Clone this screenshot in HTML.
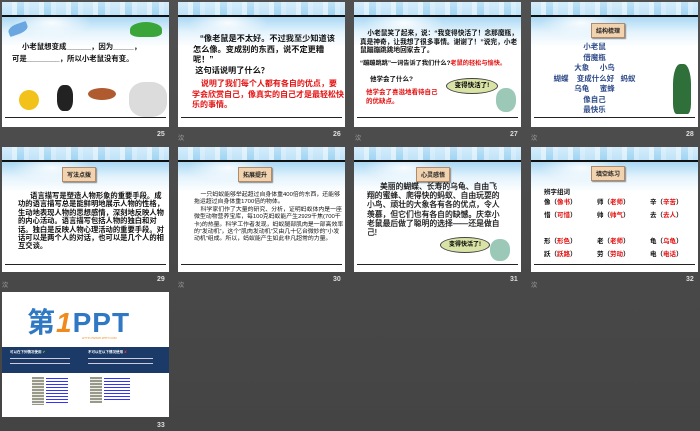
<!DOCTYPE html>
<html><head><meta charset="utf-8"><style>
*{margin:0;padding:0;box-sizing:border-box}
body{width:700px;height:431px;background:linear-gradient(#505050,#444);position:relative;overflow:hidden;font-family:"Liberation Sans","Noto Sans CJK SC",sans-serif}
.s{position:absolute;width:167px;height:125px;background:#fff;overflow:hidden}
.hd{position:absolute;left:0;top:0;width:167px;height:13px;background:linear-gradient(rgba(255,255,255,.35),rgba(255,255,255,0)),repeating-linear-gradient(90deg,#bfe3f8 0 10px,#d9effb 10px 15px,#9fd4f3 15px 22px,#cde9fa 22px 27px);}
.ln{position:absolute;left:0;top:13px;width:167px;height:2px;background:#111}
.fd{position:absolute;left:0;top:15px;width:167px;height:30px;background:radial-gradient(ellipse 40px 14px at 30% 20%,rgba(255,255,255,.9),rgba(255,255,255,0)),linear-gradient(#a9d8f4,rgba(210,235,250,.6) 50%,rgba(255,255,255,0));}
.bl{position:absolute;left:3px;top:115px;width:161px;height:1px;background:#222}
.n{position:absolute;color:#ddd;font-size:7px;font-weight:bold}
.ic{position:absolute;color:#aaa;font-size:6px}
.t{position:absolute;font-weight:bold;color:#111}
.r{color:#e41010}
.tag{position:absolute;background:#f2d3b0;border:1px solid #b08a6a;font-size:6px;font-weight:bold;padding:2px 4px;color:#222;box-shadow:1px 1px 1px #888}
.bub{position:absolute;background:#d9e3a6;border:1px solid #444;border-radius:50%;font-size:6.5px;font-weight:bold;text-align:center}
</style></head><body>

<!-- 25 -->
<div class="s" style="left:2px;top:2px">
<div class="fd"></div><div class="hd"></div><div class="ln"></div>
<div style="position:absolute;left:6px;top:22px;width:20px;height:10px;background:#6aa6e0;border-radius:50% 10% 50% 10%;transform:rotate(-20deg)"></div>
<div style="position:absolute;left:128px;top:20px;width:32px;height:15px;background:#3aa63a;border-radius:50% 50% 30% 30%"></div>
<div class="t" style="left:20px;top:40px;width:148px;font-size:7.4px;line-height:10px">小老鼠想变成______，因为_____，</div>
<div class="t" style="left:10px;top:52px;width:155px;font-size:7.4px;line-height:10px">可是________，所以小老鼠没有变。</div>
<div style="position:absolute;left:17px;top:88px;width:20px;height:20px;background:#f2c21a;border-radius:50%"></div>
<div style="position:absolute;left:55px;top:83px;width:16px;height:26px;background:#222;border-radius:40%"></div>
<div style="position:absolute;left:86px;top:86px;width:28px;height:12px;background:#b05a30;border-radius:50%"></div>
<div style="position:absolute;left:127px;top:80px;width:38px;height:35px;background:#dcdcdc;border-radius:40%"></div>
<div class="bl"></div></div>
<div class="n" style="left:157px;top:131px">25</div>

<!-- 26 -->
<div class="s" style="left:178px;top:2px">
<div class="fd"></div><div class="hd"></div><div class="ln"></div>
<div class="t" style="left:15px;top:32px;width:150px;font-size:8.2px;line-height:10.5px">&nbsp;&nbsp;&nbsp;“像老鼠是不太好。不过我至少知道该怎么像。变成别的东西，说不定更糟呢！”<br>&nbsp;这句话说明了什么？</div>
<div class="t r" style="left:14px;top:77px;width:152px;font-size:8px;line-height:10.5px">&nbsp;&nbsp;&nbsp;&nbsp;说明了我们每个人都有各自的优点，要学会欣赏自己，像真实的自己才是最轻松快乐的事情。</div>
<div class="bl"></div></div>
<div class="ic" style="left:178px;top:133px">㳄</div>
<div class="n" style="left:333px;top:131px">26</div>

<!-- 27 -->
<div class="s" style="left:354px;top:2px">
<div class="fd"></div><div class="hd"></div><div class="ln"></div>
<div class="t" style="left:6px;top:28px;width:158px;font-size:6.7px;line-height:8.5px">&nbsp;&nbsp;&nbsp;&nbsp;小老鼠笑了起来，说：“我变得快活了！念那魔瓶，真是神奇，让我想了很多事情。谢谢了！”说完，小老鼠蹦蹦跳跳地回家去了。</div>
<div class="t" style="left:6px;top:56px;width:165px;font-size:6.2px;white-space:nowrap">“蹦蹦跳跳”一词告诉了我们什么?<span class="r">老鼠的轻松与愉快。</span></div>
<div class="t" style="left:16px;top:71px;font-size:6.5px">他学会了什么?</div>
<div class="t r" style="left:12px;top:86px;width:72px;font-size:6.5px;line-height:9px">他学会了喜滋地看待自己的优缺点。</div>
<div class="bub" style="left:92px;top:76px;width:52px;height:16px;line-height:14px">变得快活了!</div>
<div style="position:absolute;left:142px;top:86px;width:20px;height:24px;background:#9cc8b8;border-radius:45%"></div>
<div class="bl"></div></div>
<div class="ic" style="left:355px;top:133px">㳄</div>
<div class="n" style="left:510px;top:131px">27</div>

<!-- 28 -->
<div class="s" style="left:531px;top:2px">
<div class="fd"></div><div class="hd"></div><div class="ln"></div>
<div class="tag" style="left:60px;top:21px">结构梳理</div>
<div class="t" style="left:-20px;top:40px;width:167px;color:#2f4c8a;font-size:7.5px;line-height:10.5px;text-align:center">小老鼠<br>借魔瓶<br>大象&nbsp;&nbsp;&nbsp;&nbsp;&nbsp;小鸟<br>蝴蝶&nbsp;&nbsp;&nbsp;&nbsp;变成什么好&nbsp;&nbsp;&nbsp;蚂蚁<br>乌龟&nbsp;&nbsp;&nbsp;&nbsp;&nbsp;蜜蜂<br>像自己<br>最快乐</div>
<div style="position:absolute;left:142px;top:62px;width:18px;height:50px;background:#2f6f3a;border-radius:40% 40% 20% 20%"></div>
<div class="bl"></div></div>
<div class="ic" style="left:531px;top:133px">㳄</div>
<div class="n" style="left:686px;top:131px">28</div>

<!-- 29 -->
<div class="s" style="left:2px;top:147px">
<div class="fd"></div><div class="hd"></div><div class="ln"></div>
<div class="tag" style="left:60px;top:20px">写法点拨</div>
<div class="t" style="left:16px;top:45px;width:150px;font-size:7.3px;line-height:8.4px">&nbsp;&nbsp;&nbsp;&nbsp;&nbsp;&nbsp;语言描写是塑造人物形象的重要手段。成功的语言描写总是能鲜明地展示人物的性格，生动地表现人物的思想感情，深刻地反映人物的内心活动。语言描写包括人物的独白和对话。独白是反映人物心理活动的重要手段。对话可以是两个人的对话，也可以是几个人的相互交谈。</div>
<div class="bl" style="top:117px"></div></div>
<div class="ic" style="left:2px;top:280px">㳄</div>
<div class="n" style="left:157px;top:276px">29</div>

<!-- 30 -->
<div class="s" style="left:178px;top:147px">
<div class="fd"></div><div class="hd"></div><div class="ln"></div>
<div class="tag" style="left:60px;top:20px">拓展提升</div>
<div class="t" style="left:16px;top:45px;width:150px;font-size:5.9px;line-height:7.4px;font-weight:normal">&nbsp;&nbsp;&nbsp;&nbsp;一只蚂蚁能够举起超过自身体重400倍的东西，还能够拖运超过自身体重1700倍的物体。<br>&nbsp;&nbsp;&nbsp;&nbsp;科学家们作了大量的研究、分析，证明蚂蚁体内是一座微型动物营养宝库，每100克蚂蚁能产生2929千焦(700千卡)的热量。科学工作者发现，蚂蚁腿部肌肉是一部高效率的“发动机”，这个“肌肉发动机”又由几十亿台微妙的“小发动机”组成。所以，蚂蚁能产生如此非凡超常的力量。</div>
<div class="bl" style="top:117px"></div></div>
<div class="ic" style="left:178px;top:280px">㳄</div>
<div class="n" style="left:333px;top:276px">30</div>

<!-- 31 -->
<div class="s" style="left:354px;top:147px">
<div class="fd"></div><div class="hd"></div><div class="ln"></div>
<div class="tag" style="left:62px;top:20px">心灵感悟</div>
<div class="t" style="left:13px;top:35px;width:133px;font-size:7.8px;line-height:9.2px;font-weight:normal;-webkit-text-stroke:0.2px #111">&nbsp;&nbsp;&nbsp;&nbsp;&nbsp;&nbsp;美丽的蝴蝶、长寿的乌龟、自由飞翔的蜜蜂、爬得快的蚂蚁、自由玩耍的小鸟、顽壮的大象各有各的优点，令人羡慕，但它们也有各自的缺憾。庆幸小老鼠最后做了聪明的选择——还是做自己!</div>
<div class="bub" style="left:86px;top:90px;width:50px;height:16px;line-height:14px;font-size:6px">变得快活了!</div>
<div style="position:absolute;left:136px;top:92px;width:20px;height:22px;background:#9cc8b8;border-radius:45%"></div>
<div class="bl" style="top:117px"></div></div>
<div class="n" style="left:510px;top:276px">31</div>

<!-- 32 -->
<div class="s" style="left:531px;top:147px">
<div class="fd"></div><div class="hd"></div><div class="ln"></div>
<div class="tag" style="left:60px;top:19px">填空练习</div>
<div class="t" style="left:13px;top:39px;font-size:6.5px">辨字组词</div>
<div class="t" style="left:13px;top:49px;width:155px;font-size:6.5px;line-height:13px;white-space:nowrap">
<span style="display:inline-block;width:53px">像（<span class="r">像书</span>）</span><span style="display:inline-block;width:53px">师（<span class="r">老师</span>）</span>辛（<span class="r">辛苦</span>）<br>
<span style="display:inline-block;width:53px">惜（<span class="r">可惜</span>）</span><span style="display:inline-block;width:53px">帅（<span class="r">帅气</span>）</span>去（<span class="r">去人</span>）<br><br>
<span style="display:inline-block;width:53px">形（<span class="r">形色</span>）</span><span style="display:inline-block;width:53px">老（<span class="r">老师</span>）</span>龟（<span class="r">乌龟</span>）<br>
<span style="display:inline-block;width:53px">跃（<span class="r">跃路</span>）</span><span style="display:inline-block;width:53px">劳（<span class="r">劳动</span>）</span>电（<span class="r">电话</span>）</div>
<div class="bl" style="top:117px"></div></div>
<div class="ic" style="left:531px;top:280px">㳄</div>
<div class="n" style="left:686px;top:276px">32</div>

<!-- 33 -->
<div class="s" style="left:2px;top:292px">
<div style="position:absolute;left:25px;top:16px;font-size:28px;line-height:30px;font-weight:bold;color:#2f78c4;letter-spacing:1px">第<span style="color:#f08a1c;font-style:italic">1</span>PPT</div>
<div style="position:absolute;left:80px;top:44px;font-size:3px;color:#f08a1c">HTTP://WWW.1PPT.COM</div>
<div style="position:absolute;left:0;top:55px;width:167px;height:26px;background:#1b3a68"></div>
<div style="position:absolute;left:8px;top:58px;font-size:3.5px;color:#fff;font-weight:bold">可以在下列情况使用 <span style="color:#7ed321">✔</span></div>
<div style="position:absolute;left:86px;top:58px;font-size:3.5px;color:#fff;font-weight:bold">不可以在以下情况使用 <span style="color:#e33">✘</span></div>
<div style="position:absolute;left:8px;top:66px;width:60px;height:1px;background:#ccd;box-shadow:0 5px 0 #ccd"></div>
<div style="position:absolute;left:86px;top:66px;width:65px;height:1px;background:#ccd;box-shadow:0 5px 0 #ccd"></div>
<div style="position:absolute;left:30px;top:85px;width:12px;height:28px;background:repeating-linear-gradient(#998 0 2px,#eee 2px 3px)"></div>
<div style="position:absolute;left:44px;top:86px;width:22px;height:26px;background:repeating-linear-gradient(#33f 0 1px,#fff 1px 3px)"></div>
<div style="position:absolute;left:88px;top:85px;width:12px;height:26px;background:repeating-linear-gradient(#998 0 2px,#eee 2px 3px)"></div>
<div style="position:absolute;left:102px;top:86px;width:26px;height:22px;background:repeating-linear-gradient(#33f 0 1px,#fff 1px 3px)"></div>
</div>
<div class="n" style="left:157px;top:422px">33</div>
</body></html>
